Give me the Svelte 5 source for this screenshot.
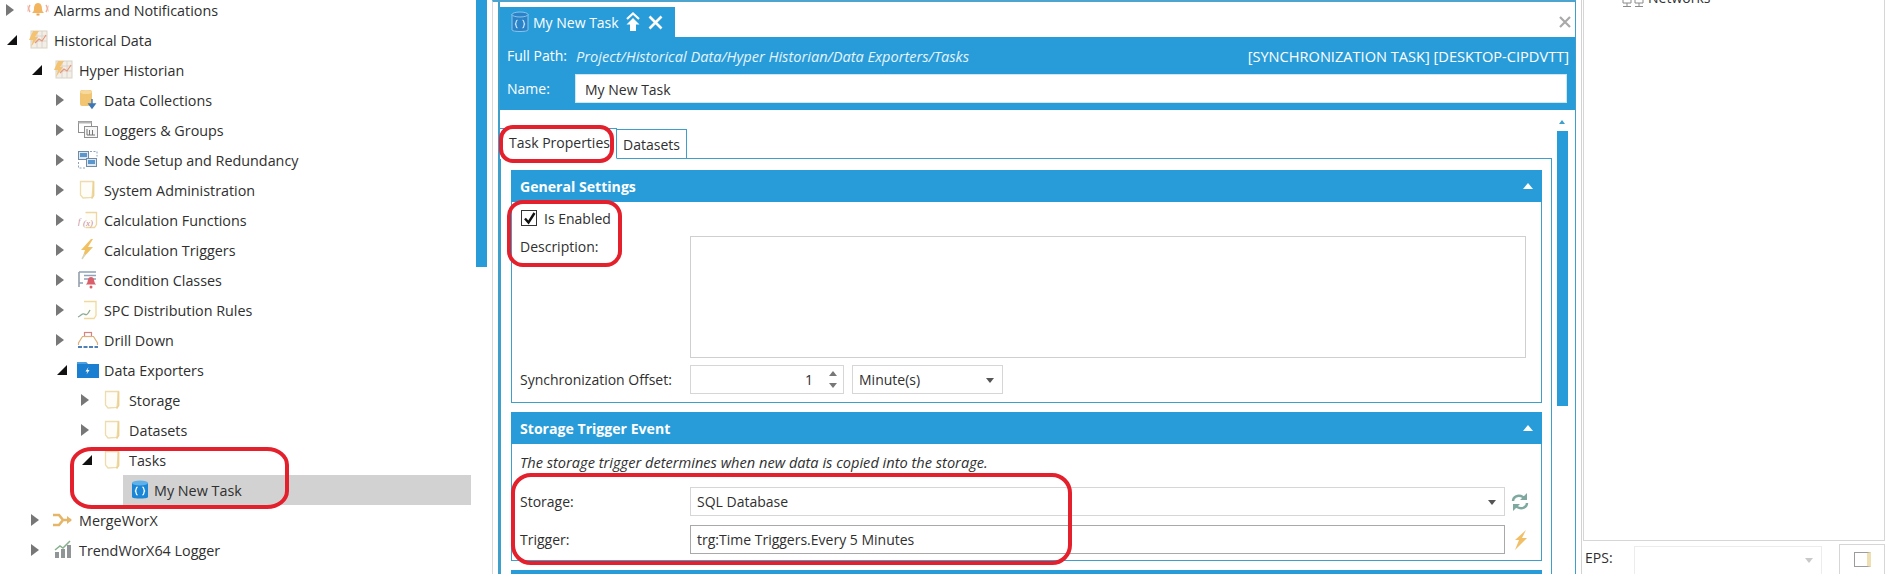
<script>
  const tree = [
    { label: "Alarms and Notifications", level: 0, arrow: "closed", icon: "bell" },
    { label: "Historical Data", level: 0, arrow: "open", icon: "chart" },
    { label: "Hyper Historian", level: 1, arrow: "open", icon: "chart" },
    { label: "Data Collections", level: 2, arrow: "closed", icon: "collect" },
    { label: "Loggers & Groups", level: 2, arrow: "closed", icon: "loggers" },
    { label: "Node Setup and Redundancy", level: 2, arrow: "closed", icon: "nodes" },
    { label: "System Administration", level: 2, arrow: "closed", icon: "page" },
    { label: "Calculation Functions", level: 2, arrow: "closed", icon: "fx" },
    { label: "Calculation Triggers", level: 2, arrow: "closed", icon: "bolt" },
    { label: "Condition Classes", level: 2, arrow: "closed", icon: "condition" },
    { label: "SPC Distribution Rules", level: 2, arrow: "closed", icon: "spc" },
    { label: "Drill Down", level: 2, arrow: "closed", icon: "drill" },
    { label: "Data Exporters", level: 2, arrow: "open", icon: "exporter" },
    { label: "Storage", level: 3, arrow: "closed", icon: "page" },
    { label: "Datasets", level: 3, arrow: "closed", icon: "page" },
    { label: "Tasks", level: 3, arrow: "open", icon: "page" },
    { label: "My New Task", level: 4, arrow: "none", icon: "task", selected: true },
    { label: "MergeWorX", level: 1, arrow: "closed", icon: "merge" },
    { label: "TrendWorX64 Logger", level: 1, arrow: "closed", icon: "trend" },
    { label: "", level: 1, arrow: "none", icon: "stub" },
  ];
</script>

{#snippet icon(name)}
  <svg class="ico" width="22" height="22" viewBox="0 0 22 22" aria-hidden="true">
    {#if name === "bell"}
      <path d="M11 4c-3 0-4 3-4 6 0 2-1 3-2 4h12c-1-1-2-2-2-4 0-3-1-6-4-6z" fill="#f2b45e" />
      <rect x="9.500" y="14.500" width="3" height="2" fill="#e8a24a" />
      <path d="M3 6c-1.500 2-1.500 5 0 7M19 6c1.500 2 1.500 5 0 7" fill="none" stroke="#eeb09c" stroke-width="1.500" />
      <path d="M0.500 6.500c-.8 2-.8 4 0 6M21.500 6.500c.8 2 .8 4 0 6" fill="none" stroke="#f4cfc4" stroke-width="1" />
    {:else if name === "chart"}
      <rect x="4" y="2" width="16" height="17" fill="#f4efe6" stroke="#d9d3c8" />
      <path d="M4 7h16M4 12h16M10 2v17M15 2v17" stroke="#d8d4ce" stroke-width="1" />
      <path d="M6 2h6L8 8h3l-7 10 2-7H2z" fill="#f3c372" />
      <path d="M8 14l4-4 3 2 4-6" fill="none" stroke="#e9967a" stroke-width="1.200" />
    {:else if name === "collect"}
      <rect x="3" y="1" width="12" height="16" rx="2" fill="#f2c572" />
      <ellipse cx="9" cy="3" rx="6" ry="2" fill="#f7d99e" />
      <path d="M15 10v8M12 15l3 4 3-4z" fill="#3b78b5" stroke="#3b78b5" stroke-width="1.400" />
    {:else if name === "loggers"}
      <rect x="1.500" y="2.500" width="13" height="11" fill="#fff" stroke="#8f8f8f" />
      <rect x="1.500" y="2.500" width="13" height="2" fill="#b5b5b5" />
      <rect x="7.500" y="7.500" width="13" height="11" fill="#f6f6f6" stroke="#8f8f8f" />
      <path d="M10 10v6h8M12.500 11v5M15.500 11v5" fill="none" stroke="#777" />
    {:else if name === "nodes"}
      <rect x="1.500" y="2.500" width="10" height="8" fill="#dfe8f0" stroke="#6f8ba5" />
      <rect x="3" y="4" width="7" height="4" fill="#5a97cd" />
      <rect x="9.500" y="9.500" width="10" height="8" fill="#dfe8f0" stroke="#6f8ba5" />
      <rect x="11" y="11" width="7" height="4" fill="#5a97cd" />
      <path d="M13 2.500h7v5M1.500 13v6h7" fill="none" stroke="#8aa4bd" stroke-dasharray="2 1.500" />
    {:else if name === "page"}
      <path d="M3.500 2.500h13l-1.500 16-9 .5-2.500-3z" fill="#fffdf7" stroke="#eddcae" stroke-width="1.300" />
      <path d="M16.500 2.500v14l-2 3" fill="none" stroke="#ecd193" stroke-width="1.800" />
    {:else if name === "fx"}
      <path d="M8.500 3.500h11v12l-2 3h-9" fill="#fffdf7" stroke="#edd69f" stroke-width="1.300" />
      <text x="1" y="15" class="fx">f</text>
      <text x="6" y="17" class="fx">(x)</text>
    {:else if name === "bolt"}
      <path d="M14 0L4 11h4l-3 9 11-12h-5l5-8z" fill="#f0c062" />
      <path d="M5 20l3-5" stroke="#d9d2bf" stroke-width="1.500" />
    {:else if name === "condition"}
      <path d="M2 3v15" stroke="#8d99a6" stroke-width="1.500" />
      <path d="M2 3h17M7 6.500h12M7 10h12M2 14h4" stroke="#8fa3b8" stroke-width="1.400" />
      <path d="M14 8c-3 0-3 3-3.500 5-.3 1.500-1.500 2-1.500 2.500h10c0-.5-1.200-1-1.500-2.500-.5-2-.5-5-3.500-5z" fill="#d9606a" />
      <circle cx="14" cy="18" r="1.500" fill="#d9606a" />
    {:else if name === "spc"}
      <path d="M7 2.500h12v14l-2 3H7" fill="#fffdf7" stroke="#eeda9f" stroke-width="1.300" />
      <path d="M1 18c3-1 4-4 6-3s3 2 6-4" fill="none" stroke="#8dab97" stroke-width="1.300" />
    {:else if name === "drill"}
      <rect x="7.500" y="3.500" width="7" height="4" fill="#fff" stroke="#d9827f" stroke-width="1.200" />
      <path d="M1.500 16v-2l4-6.500h11l4 6.500v2" fill="none" stroke="#dcb27c" stroke-width="1.200" />
      <path d="M1 18h20" stroke="#4e7fb5" stroke-width="2" stroke-dasharray="4 1.500" />
    {:else if name === "exporter"}
      <path d="M0 3h9l2 2h11v14H0z" fill="#1a7fd0" />
      <path d="M0 3h9l1 2H0z" fill="#4aa0e0" />
      <path d="M11.500 8l-3 4.500h2l-1 3 3-4.500h-2z" fill="#fff" />
    {:else if name === "task"}
      <path d="M3 4v14c0 2 16 2 16 0V4z" fill="#1b86d6" />
      <ellipse cx="11" cy="4" rx="8" ry="2.500" fill="#5eb0ea" />
      <path d="M8.500 8c-2 .5-1 3-2 4 1 1 0 3.500 2 4M13.500 8c2 .5 1 3 2 4-1 1 0 3.500-2 4" fill="none" stroke="#fff" stroke-width="1.300" />
    {:else if name === "merge"}
      <path d="M1 6h6l4 5-4 5H1M11 11h8" fill="none" stroke="#e5b568" stroke-width="2.600" />
      <path d="M15 7l5 4-5 4z" fill="#e5b568" />
    {:else if name === "trend"}
      <rect x="3" y="13" width="4" height="6" fill="#8f9695" />
      <rect x="9" y="10" width="4" height="9" fill="#8f9695" />
      <rect x="15" y="6" width="4" height="13" fill="#8f9695" />
      <path d="M3 11l5-4 3 2 7-7" fill="none" stroke="#86b08e" stroke-width="1.500" />
    {:else if name === "stub"}
      <rect x="3.500" y="11.500" width="9" height="9" fill="#fff" stroke="#8f8f8f" />
    {/if}
  </svg>
{/snippet}

<div class="screen">
  <aside class="side">
    <ul class="tree">
      {#each tree as row}
        <li class="row" class:row--selected={row.selected} style="--level: {row.level}">
          <span class="arrow arrow--{row.arrow}"></span>
          <span class="row__body">
            {@render icon(row.icon)}
            <span>{row.label}</span>
          </span>
        </li>
      {/each}
    </ul>
    <div class="side__bar"></div>
  </aside>

  <main class="doc">
    <div class="doc__tabs">
      <div class="doc__tab">
        <svg width="20" height="22" viewBox="0 0 20 22" aria-hidden="true">
          <path d="M2 3v16c0 2 16 2 16 0V3" fill="#2a83c9" stroke="#8cc4ea" />
          <ellipse cx="10" cy="3.500" rx="8" ry="2.500" fill="#2a83c9" stroke="#8cc4ea" />
          <path d="M7.500 9c-2 .5-1 3-2 4 1 1 0 3.500 2 4M12.500 9c2 .5 1 3 2 4-1 1 0 3.500-2 4" fill="none" stroke="#cfe8f8" stroke-width="1.200" />
        </svg>
        <span>My New Task</span>
        <svg class="doc__pin" width="16" height="20" viewBox="0 0 16 20" aria-hidden="true">
          <path d="M2 7L8 1.500 14 7" fill="none" stroke="#fff" stroke-width="2.200" />
          <path d="M8 6l6.500 6.500H11V19H5v-6.500H1.500z" fill="#fff" />
        </svg>
        <svg class="doc__close" width="15" height="15" viewBox="0 0 15 15" aria-hidden="true">
          <path d="M1.500 1.500l12 12M13.500 1.500l-12 12" stroke="#fff" stroke-width="2.600" />
        </svg>
      </div>
      <svg class="doc__closeall" width="12" height="12" viewBox="0 0 12 12" aria-hidden="true">
        <path d="M1 1l10 10M11 1L1 11" stroke="#a9a9a9" stroke-width="2.200" />
      </svg>
    </div>

    <header class="info">
      <div class="info__path">
        <span class="info__label">Full Path:</span>
        <em>Project/Historical Data/Hyper Historian/Data Exporters/Tasks</em>
        <span class="info__type">[SYNCHRONIZATION TASK] [DESKTOP-CIPDVTT]</span>
      </div>
      <div class="info__name">
        <span class="info__label">Name:</span>
        <div class="info__input">My New Task</div>
      </div>
    </header>

    <div class="body">
      <div class="pane">
        <div class="tabs">
          <span class="tab tab--active">Task Properties</span>
          <span class="tab">Datasets</span>
        </div>
        <div class="tabpage">
          <section class="group">
            <h3 class="group__head">General Settings <i class="caret"></i></h3>
            <div class="group__body group__body--general">
              <label class="check">
                <span class="check__box">
                  <svg width="13" height="13" viewBox="0 0 13 13" aria-hidden="true">
                    <path d="M2 6.500l3.500 4L11.500 1" fill="none" stroke="#111" stroke-width="2.400" />
                  </svg>
                </span>
                Is Enabled
              </label>
              <div class="form form--desc">
                <span class="form__label">Description:</span>
                <div class="area"></div>
              </div>
              <div class="form">
                <span class="form__label">Synchronization Offset:</span>
                <div class="field field--spin">
                  <span>1</span>
                  <span class="spin"><i class="spin__up"></i><i class="spin__down"></i></span>
                </div>
                <div class="field field--unit">
                  <span>Minute(s)</span>
                  <i class="drop"></i>
                </div>
              </div>
            </div>
          </section>

          <section class="group">
            <h3 class="group__head">Storage Trigger Event <i class="caret"></i></h3>
            <div class="group__body group__body--trigger">
              <p class="hint">The storage trigger determines when new data is copied into the storage.</p>
              <div class="form form--storage">
                <span class="form__label">Storage:</span>
                <div class="field field--wide">
                  <span>SQL Database</span>
                  <i class="drop"></i>
                </div>
                <svg width="18" height="18" viewBox="0 0 18 18" aria-hidden="true">
                  <path d="M2 8c0-4 5-7 10-4l2 2M16 10c0 4-5 7-10 4l-2-2" fill="none" stroke="#7fa9a0" stroke-width="2.400" />
                  <path d="M16 0v7H9zM2 18v-7h7z" fill="#7fa9a0" />
                </svg>
              </div>
              <div class="form form--trigger">
                <span class="form__label">Trigger:</span>
                <div class="field field--wide field--dark">
                  <span>trg:Time Triggers.Every 5 Minutes</span>
                </div>
                <svg width="18" height="20" viewBox="0 0 18 20" aria-hidden="true">
                  <path d="M15 0L4 10h4L4 20l12-12h-5l4-8z" fill="#f0bf68" />
                </svg>
              </div>
            </div>
          </section>

          <div class="group__head group__head--next"></div>
        </div>
      </div>
      <div class="scroll">
        <i class="scroll__up"></i>
        <div class="scroll__thumb"></div>
      </div>
    </div>
  </main>

  <aside class="right">
    <div class="list">
      <div class="list__item">
        <svg width="24" height="10" viewBox="0 0 24 10" aria-hidden="true">
          <path d="M2 0v4h8V0M6 4v3M2 7.500h8M14 0v4h8V0M18 4v3M14 7.500h8" fill="none" stroke="#8a8a8a" />
        </svg>
        <span>Networks</span>
      </div>
    </div>
    <div class="eps">
      <span>EPS:</span>
      <div class="eps__combo"><i class="drop drop--faint"></i></div>
      <div class="eps__btn"><span class="eps__glyph"></span></div>
    </div>
  </aside>

  <!-- red call-outs drawn over the screenshot -->
  <div class="mark mark--tree"></div>
  <div class="mark mark--tab"></div>
  <div class="mark mark--enabled"></div>
  <div class="mark mark--storage"></div>
</div>

<style>
  :global(body) {
    margin: 0;
    background: #fff;
  }

  .screen {
    position: relative;
    display: grid;
    grid-template-columns: 492px 1083px 1fr;
    width: 1890px;
    height: 574px;
    overflow: hidden;
    background: #fff;
    color: #2f2f2f;
    font-family: "Open Sans", "Noto Sans", sans-serif;
    font-size: 14px;
  }

  /* tree */
  .side {
    display: flex;
    height: 574px;
    overflow: hidden;
  }

  .tree {
    list-style: none;
    width: 476px;
    margin: -5px 0 0;
    padding: 0;
    font-size: 14.350px;
  }

  .row {
    display: flex;
    align-items: center;
    height: 30px;
    padding-left: calc(var(--level) * 25px + 6px);
  }

  .row__body {
    display: flex;
    align-items: center;
    gap: 5px;
    flex: 1;
    height: 100%;
    margin-right: 5px;
    padding-left: 8px;
  }

  .row--selected {
    padding-left: 0;
  }

  .row--selected .arrow {
    display: none;
  }

  .row--selected .row__body {
    margin-left: 123px;
    background: #d2d2d2;
    padding-left: 6px;
    gap: 3px;
  }

  .ico {
    flex: none;
  }

  .fx {
    font-family: "Liberation Serif", serif;
    font-style: italic;
    font-size: 9px;
    fill: #c58c9e;
  }

  .arrow {
    flex: none;
    width: 12px;
    height: 12px;
    box-sizing: border-box;
  }

  .arrow--closed {
    border-left: 8px solid #777;
    border-top: 6px solid transparent;
    border-bottom: 6px solid transparent;
    margin-right: 1px;
  }

  .arrow--open {
    width: 0;
    height: 0;
    border-right: 10px solid #111;
    border-top: 10px solid transparent;
    margin-right: 2px;
    margin-left: 1px;
  }

  .arrow--none {
    visibility: hidden;
  }

  .side__bar {
    flex: none;
    align-self: flex-start;
    width: 11px;
    height: 267px;
    background: #289cd9;
  }

  /* document */
  .doc {
    display: flex;
    flex-direction: column;
    box-sizing: border-box;
    height: 574px;
    border-top: 2px solid #4da4cf;
    border-left: 1px solid #d8d8d8;
    border-right: 1px solid #3f9fcb;
    margin-right: -1px;
    padding-left: 5px;
    position: relative;
  }

  .doc::before {
    content: "";
    position: absolute;
    left: 5px;
    top: 0;
    bottom: 0;
    width: 2px;
    background: #3f9fcb;
  }

  .doc__tabs {
    display: flex;
    justify-content: space-between;
    align-items: flex-end;
    height: 35px;
    flex: none;
  }

  .doc__tab {
    display: flex;
    align-items: center;
    width: 177px;
    height: 30px;
    box-sizing: border-box;
    padding-left: 12px;
    background: #289cd9;
    color: #fff;
  }

  .doc__tab span {
    margin-left: 3px;
  }

  .doc__pin {
    margin-left: 6px;
  }

  .doc__close {
    margin-left: 7px;
  }

  .doc__closeall {
    margin: 0 4px 9px 0;
  }

  .info {
    flex: none;
    box-sizing: border-box;
    height: 73px;
    background: #289cd9;
    color: #fff;
    padding: 0 6px 6px 9px;
  }

  .info__path {
    display: flex;
    align-items: center;
    height: 37px;
  }

  .info__path em {
    margin-left: 9px;
    color: #e4f4fc;
    font-size: 14.600px;
  }

  .info__type {
    margin-left: auto;
    font-size: 14.600px;
  }

  .info__name {
    display: flex;
    align-items: center;
  }

  .info__label {
    width: 68px;
    flex: none;
  }

  .info__path .info__label {
    width: auto;
  }

  .info__input {
    flex: 1;
    height: 29px;
    line-height: 29px;
    margin-right: 2px;
    padding-left: 9px;
    background: #fff;
    color: #2f2f2f;
    border: 1px solid #cfe6f3;
    box-sizing: border-box;
  }

  .body {
    position: relative;
    display: flex;
    flex: 1;
    min-height: 0;
    padding-left: 2px;
  }

  .pane {
    width: 1052px;
    flex: none;
  }

  .tabs {
    display: flex;
    align-items: flex-end;
    height: 48px;
  }

  .tab {
    box-sizing: border-box;
    display: flex;
    align-items: center;
    height: 30px;
    margin-bottom: -1px;
    padding: 0 6px;
    border: 1px solid #3f9fcb;
    border-left: none;
    background: #fff;
  }

  .tab--active {
    width: 117px;
    height: 31px;
    padding-bottom: 2px;
    padding-left: 9px;
    border-bottom-color: #fff;
    position: relative;
    z-index: 1;
  }

  .tabpage {
    box-sizing: border-box;
    height: 500px;
    border: 1px solid #3f9fcb;
    padding: 11px 9px 0 10px;
  }

  .group {
    margin-bottom: 9px;
  }

  .group__head {
    display: flex;
    align-items: center;
    justify-content: space-between;
    box-sizing: border-box;
    height: 32px;
    margin: 0;
    padding: 0 9px;
    background: #289cd9;
    color: #fff;
    font-size: 14.100px;
    font-weight: 700;
  }

  .group__head--next {
    height: 20px;
  }

  .caret {
    width: 0;
    height: 0;
    border-left: 5.500px solid transparent;
    border-right: 5.500px solid transparent;
    border-bottom: 6px solid #fff;
  }

  .group__body {
    box-sizing: border-box;
    border: 1px solid #3f9fcb;
    border-top: none;
    padding: 0 8px;
  }

  .group__body--general {
    height: 201px;
  }

  .group__body--trigger {
    height: 117px;
  }

  .check {
    display: flex;
    align-items: center;
    gap: 7px;
    height: 32px;
    padding-left: 1px;
  }

  .check__box {
    display: flex;
    align-items: center;
    justify-content: center;
    box-sizing: border-box;
    width: 16px;
    height: 16px;
    border: 1px solid #333;
  }

  .form {
    display: flex;
    align-items: center;
  }

  .form__label {
    flex: none;
    width: 170px;
  }

  .form--desc {
    align-items: flex-start;
    height: 129px;
    margin-top: 2px;
  }

  .form--desc .form__label {
    line-height: 22px;
  }

  .area {
    box-sizing: border-box;
    width: 836px;
    height: 122px;
    border: 1px solid #cfcfcf;
  }

  .field {
    box-sizing: border-box;
    display: flex;
    align-items: center;
    height: 29px;
    padding: 0 6px;
    border: 1px solid #d6d6d6;
    position: relative;
  }

  .field--spin {
    justify-content: flex-end;
    width: 154px;
    margin-right: 8px;
  }

  .spin {
    display: flex;
    flex-direction: column;
    gap: 7px;
    margin-left: 16px;
  }

  .spin__up,
  .spin__down {
    display: block;
    width: 0;
    height: 0;
    border-left: 4.500px solid transparent;
    border-right: 4.500px solid transparent;
  }

  .spin__up {
    border-bottom: 5px solid #777;
  }

  .spin__down {
    border-top: 5px solid #777;
  }

  .field--unit {
    width: 151px;
  }

  .drop {
    position: absolute;
    right: 8px;
    top: 50%;
    margin-top: -2px;
    width: 0;
    height: 0;
    border-left: 4px solid transparent;
    border-right: 4px solid transparent;
    border-top: 5px solid #555;
  }

  .drop--faint {
    border-top-color: #c9c9c9;
  }

  .hint {
    margin: 0;
    height: 36px;
    line-height: 36px;
    font-style: italic;
    font-size: 14.600px;
  }

  .form--storage {
    height: 29px;
    margin-top: 7px;
  }

  .form--trigger {
    height: 29px;
    margin-top: 9px;
  }

  .field--wide {
    width: 815px;
    margin-right: 6px;
  }

  .field--dark {
    border-color: #a9a9a9;
  }

  .scroll {
    position: relative;
    width: 11px;
    margin-left: 5px;
  }

  .scroll__up {
    position: absolute;
    left: 2px;
    top: 10px;
    width: 0;
    height: 0;
    border-left: 3.500px solid transparent;
    border-right: 3.500px solid transparent;
    border-bottom: 4px solid #3f9fcb;
  }

  .scroll__thumb {
    margin-top: 21px;
    height: 275px;
    background: #289cd9;
  }

  /* right panel */
  .right {
    position: relative;
    display: flex;
    flex-direction: column;
    box-sizing: border-box;
    height: 574px;
    padding: 0 5px 0 7px;
    border-left: 1px solid transparent;
  }

  .right::before {
    content: "";
    position: absolute;
    left: 5px;
    top: 0;
    bottom: 0;
    width: 1px;
    background: #d2d2d2;
  }

  .list {
    box-sizing: border-box;
    height: 541px;
    flex: none;
    border: 1px solid #d6d6d6;
    border-top: none;
    overflow: hidden;
  }

  .list__item {
    display: flex;
    align-items: flex-start;
    gap: 3px;
    margin-top: -11px;
    padding-left: 37px;
    color: #333;
    line-height: 18px;
  }

  .list__item svg {
    margin-top: 10px;
  }

  .eps {
    display: flex;
    align-items: center;
    height: 33px;
    padding-left: 2px;
  }

  .eps > span {
    width: 49px;
    flex: none;
  }

  .eps__combo {
    position: relative;
    box-sizing: border-box;
    width: 188px;
    height: 29px;
    margin-top: 5px;
    border: 1px solid #ececec;
  }

  .eps__btn {
    display: flex;
    align-items: center;
    justify-content: center;
    box-sizing: border-box;
    width: 46px;
    height: 31px;
    margin-left: auto;
    margin-top: 3px;
    border: 1px solid #d6d6d6;
    border-bottom: none;
  }

  .eps__glyph {
    box-sizing: border-box;
    width: 17px;
    height: 15px;
    border: 1px solid #9b9b9b;
    border-right: 4px solid #efe0b4;
  }

  /* call-outs */
  .mark {
    position: absolute;
    z-index: 2;
    box-sizing: border-box;
    border: 4px solid #e3202c;
    pointer-events: none;
  }

  .mark--tree {
    left: 70px;
    top: 447px;
    width: 219px;
    height: 62px;
    border-radius: 22px / 18px;
  }

  .mark--tab {
    left: 499px;
    top: 125px;
    width: 115px;
    height: 38px;
    border-radius: 14px;
  }

  .mark--enabled {
    left: 507px;
    top: 200px;
    width: 115px;
    height: 67px;
    border-radius: 16px;
  }

  .mark--storage {
    left: 511px;
    top: 473px;
    width: 561px;
    height: 92px;
    border-radius: 20px;
  }
</style>
